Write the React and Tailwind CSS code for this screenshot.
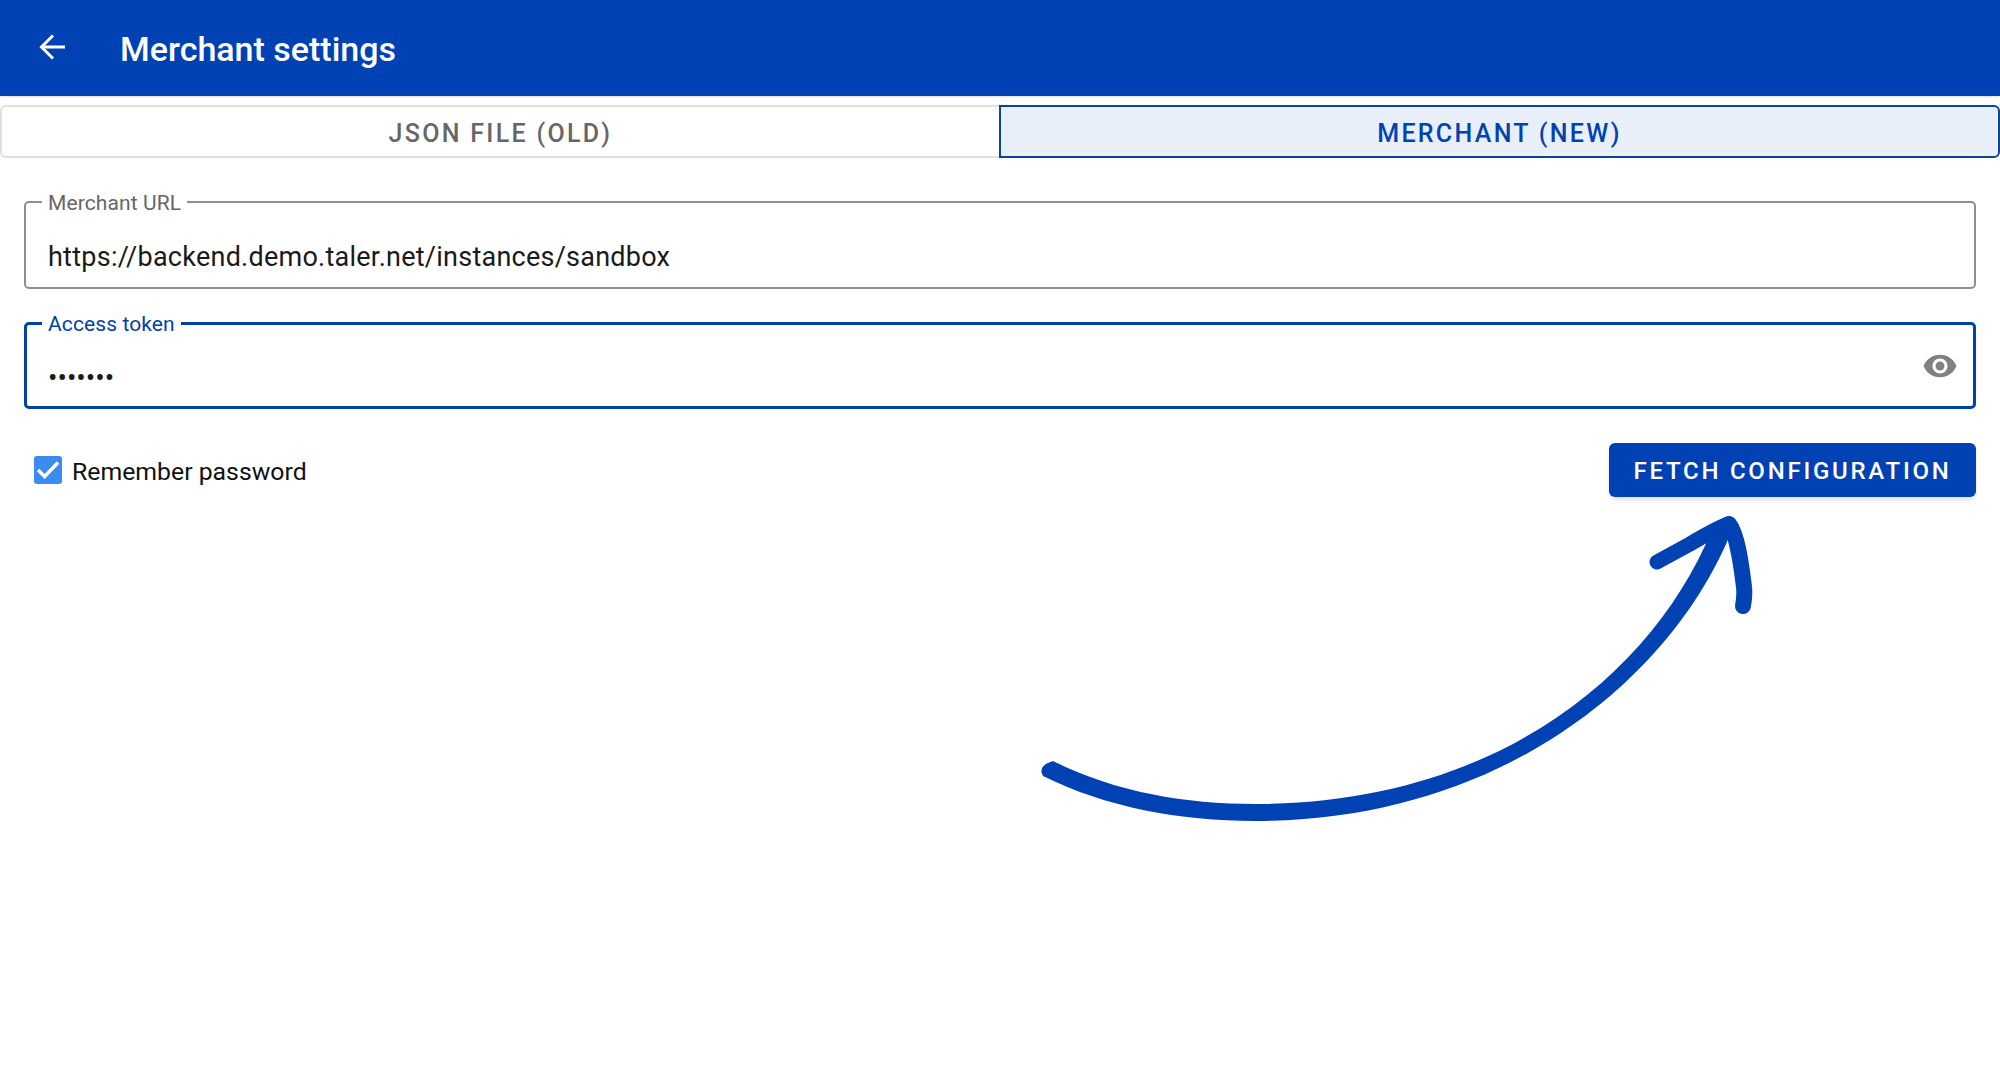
import React from 'react'

const curve =
  'M1053 761 C1115 792 1185 804 1255 804 C1495 804 1652 675 1712 530 L1732 530 C1672 680 1500 821 1255 821 C1180 821 1105 807 1043 776 Q1037 766 1053 761 Z'

const Arrow = () => (
  <svg className="absolute left-0 top-0 pointer-events-none" width="2000" height="1092" viewBox="0 0 2000 1092" fill="none">
    <path d={curve} fill="#0042b3" />
    <path d="M1657 562 L1690 544 C1705 535 1716 529 1728 524" stroke="#0042b3" strokeWidth="15" strokeLinecap="round" />
    <path d="M1729 524 C1737 534 1741 562 1744 587 C1745 594 1744 600 1743 606" stroke="#0042b3" strokeWidth="16" strokeLinecap="round" />
  </svg>
)

const Tab = ({ active, children }) => (
  <div
    className={
      active
        ? 'flex-1 h-[53px] pt-[4px] flex items-center justify-center rounded-r-[6px] border-2 border-[#0d4596] bg-[#e9eff9] text-[#0042b3] text-[25px] font-medium tracking-[2.3px]'
        : 'flex-1 h-[53px] pt-[4px] flex items-center justify-center rounded-l-[6px] border-2 border-r-0 border-[#e0e0e0] bg-white text-[#666666] text-[25px] font-medium tracking-[2.3px]'
    }
  >
    {children}
  </div>
)

const App = () => {
  return (
    <div className="relative h-[1092px] bg-white font-['Roboto',sans-serif] overflow-hidden">
      <header className="h-24 bg-[#0042b3] flex items-center shadow-sm">
        <svg className="ml-[38px]" width="30" height="30" viewBox="0 0 30 30" fill="none" stroke="white" strokeWidth="3">
          <path d="M27 14 H4" />
          <path d="M15 2.5 L3.5 14 L15 25.5" />
        </svg>
        <h1 className="ml-[52px] pt-[2px] text-[34px] font-medium text-white">Merchant settings</h1>
      </header>

      <div className="flex mt-[9px]">
        <Tab>JSON FILE (OLD)</Tab>
        <Tab active>MERCHANT (NEW)</Tab>
      </div>

      <div className="mx-6 mt-[43px] flex flex-col gap-[33px]">
        <div className="relative h-[88px] border-2 border-[#8e8e8e] rounded-[5px] flex items-end pl-[22px] pb-[12px]">
          <span className="absolute left-[16px] -top-[10px] bg-white px-[6px] text-[21px] leading-[20px] tracking-[0.1px] text-[#666666]">Merchant URL</span>
          <span className="text-[27px] leading-[36px] tracking-[0.25px] text-[#1a1a1a]">https://backend.demo.taler.net/instances/sandbox</span>
        </div>
        <div className="relative h-[87px] border-[3px] border-[#0042a5] rounded-[5px] flex items-end justify-between pl-[21px] pr-[18px] pb-[12px]">
          <span className="absolute left-[15px] -top-[11px] bg-white px-[6px] text-[21px] leading-[20px] tracking-[0.1px] text-[#0042a5]">Access token</span>
          <span className="text-[28px] leading-[32px] text-[#1a1a1a]">•••••••</span>
          <svg className="absolute right-[15px] top-[23px]" width="36" height="36" viewBox="0 0 24 24" fill="#808080">
            <path d="M12 4.5C7 4.5 2.73 7.61 1 12c1.73 4.39 6 7.5 11 7.5s9.27-3.11 11-7.5c-1.73-4.39-6-7.5-11-7.5zM12 17c-2.76 0-5-2.24-5-5s2.24-5 5-5 5 2.24 5 5-2.24 5-5 5zm0-8c-1.66 0-3 1.34-3 3s1.34 3 3 3 3-1.34 3-3-1.34-3-3-3z" />
          </svg>
        </div>
      </div>

      <div className="mx-6 mt-[34px] flex items-center justify-between">
        <label className="flex items-center ml-[10px]">
          <span className="w-7 h-7 rounded-[3px] bg-[#3b8bf0]">
            <svg width="28" height="28" viewBox="0 0 28 28" fill="none" stroke="white" strokeWidth="3.5">
              <path d="M4 14 L10.7 20.5 L24 6.5" />
            </svg>
          </span>
          <span className="ml-[10px] pt-[3px] text-[24.8px] text-[#111111]">Remember password</span>
        </label>
        <button className="h-[54px] w-[367px] pt-[2px] rounded-[6px] bg-[#0042b3] text-white text-[24px] font-medium tracking-[2.75px] shadow-md">
          FETCH CONFIGURATION
        </button>
      </div>

      <Arrow />
    </div>
  )
}

export default App
